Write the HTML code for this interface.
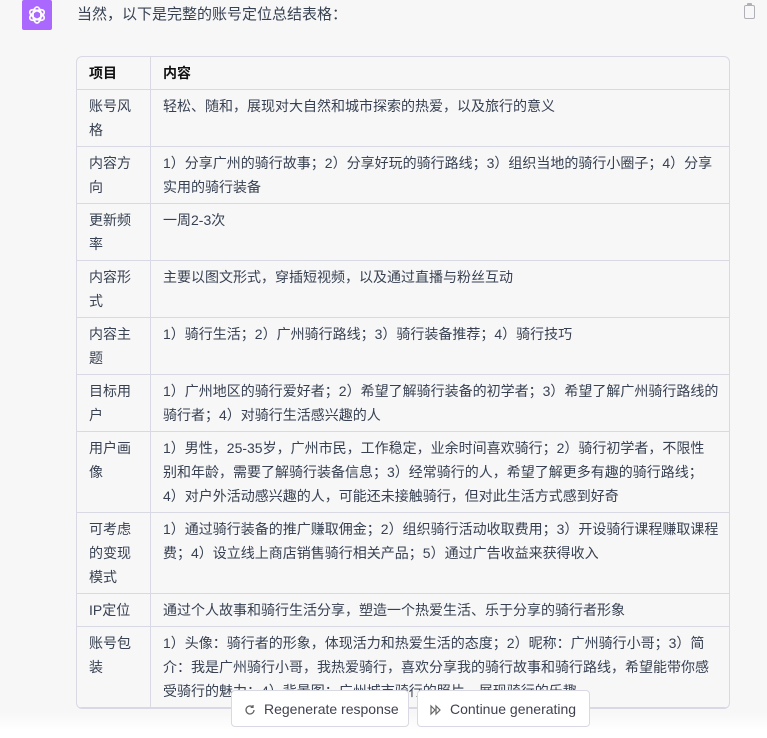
<!DOCTYPE html>
<html><head><meta charset="utf-8"><style>
body{margin:0;width:767px;height:738px;background:#f7f7f8;font-family:"Liberation Sans","Noto Sans CJK SC",sans-serif;color:#374151;overflow:hidden;position:relative}
.av{position:absolute;left:22px;top:0;width:30px;height:30px;background:#ab68ff;border-radius:2px}
.intro{position:absolute;left:77px;top:3px;font-size:15px;line-height:24px}
.clip{position:absolute;right:12px;top:5px;width:9px;height:12px;border:1.5px solid #b0b0b8;border-radius:2px}
.clip:before{content:"";position:absolute;left:2px;top:-3px;width:5px;height:3px;background:#b0b0b8;border-radius:1px}
.wrap{position:absolute;left:76px;top:56px;width:652px;height:651px;border:1px solid #d9d9e3;border-radius:6px;overflow:hidden}
table{border-collapse:collapse;width:100%;font-size:14px}
td,th{border-right:1px solid #d9d9e3;border-bottom:1px solid #d9d9e3;padding:4px 9px 4px 12px;line-height:24px;vertical-align:top;text-align:left}
td:last-child,th:last-child{border-right:none}
th{font-weight:bold;color:#111}
td:first-child,th:first-child{width:49px;padding-right:12px}
.fade{position:absolute;left:0;top:712px;width:767px;height:26px;background:linear-gradient(#f7f7f800,#fff 70%)}
.btn{position:absolute;top:690px;height:37px;background:#fff;border:1px solid #d9d9e3;border-radius:4px;font-size:14px;line-height:36px;color:#40414f;box-sizing:border-box}
.btn svg{vertical-align:-2px;margin-right:8px}
</style></head><body>
<div class="av"><svg width="30" height="30" viewBox="0 0 30 30"><g fill="none" stroke="#fff" stroke-width="1.6"><ellipse cx="15" cy="15" rx="4" ry="8"/><ellipse cx="15" cy="15" rx="4" ry="8" transform="rotate(60 15 15)"/><ellipse cx="15" cy="15" rx="4" ry="8" transform="rotate(120 15 15)"/></g></svg></div>
<div class="intro">当然，以下是完整的账号定位总结表格：</div>
<div class="clip"></div>
<div class="wrap"><table>
<tr><th>项目</th><th>内容</th></tr>
<tr><td>账号风格</td><td>轻松、随和，展现对大自然和城市探索的热爱，以及旅行的意义</td></tr>
<tr><td>内容方向</td><td>1）分享广州的骑行故事；2）分享好玩的骑行路线；3）组织当地的骑行小圈子；4）分享实用的骑行装备</td></tr>
<tr><td>更新频率</td><td>一周2-3次</td></tr>
<tr><td>内容形式</td><td>主要以图文形式，穿插短视频，以及通过直播与粉丝互动</td></tr>
<tr><td>内容主题</td><td>1）骑行生活；2）广州骑行路线；3）骑行装备推荐；4）骑行技巧</td></tr>
<tr><td>目标用户</td><td>1）广州地区的骑行爱好者；2）希望了解骑行装备的初学者；3）希望了解广州骑行路线的骑行者；4）对骑行生活感兴趣的人</td></tr>
<tr><td>用户画像</td><td>1）男性，25-35岁，广州市民，工作稳定，业余时间喜欢骑行；2）骑行初学者，不限性<br>别和年龄，需要了解骑行装备信息；3）经常骑行的人，希望了解更多有趣的骑行路线；<br>4）对户外活动感兴趣的人，可能还未接触骑行，但对此生活方式感到好奇</td></tr>
<tr><td>可考虑的变现模式</td><td>1）通过骑行装备的推广赚取佣金；2）组织骑行活动收取费用；3）开设骑行课程赚取课程费；4）设立线上商店销售骑行相关产品；5）通过广告收益来获得收入</td></tr>
<tr><td>IP定位</td><td>通过个人故事和骑行生活分享，塑造一个热爱生活、乐于分享的骑行者形象</td></tr>
<tr><td>账号包装</td><td>1）头像：骑行者的形象，体现活力和热爱生活的态度；2）昵称：广州骑行小哥；3）简介：我是广州骑行小哥，我热爱骑行，喜欢分享我的骑行故事和骑行路线，希望能带你感受骑行的魅力；4）背景图：广州城市骑行的照片，展现骑行的乐趣</td></tr>
</table></div>
<div class="fade"></div>
<div class="btn" style="left:231px;width:178px;padding-left:12px"><svg width="12" height="12" viewBox="0 0 12 12" fill="none" stroke="#666" stroke-width="1.3"><path d="M10 6a4 4 0 1 1-1.2-2.9M9 1v2.3H6.7"/></svg>Regenerate response</div>
<div class="btn" style="left:417px;width:173px;padding-left:12px"><svg width="12" height="12" viewBox="0 0 12 12" fill="none" stroke="#666" stroke-width="1.2"><path d="M1 2l4 4-4 4zM6 2l4 4-4 4z"/></svg>Continue generating</div>
</body></html>
